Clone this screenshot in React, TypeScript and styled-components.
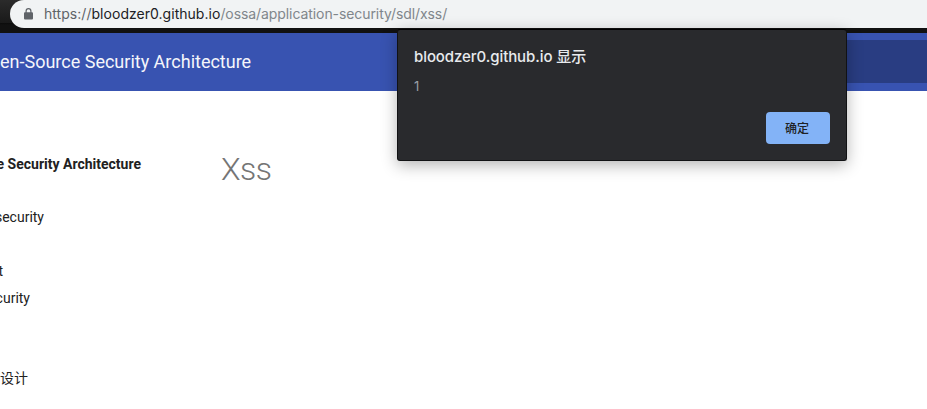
import React from "react";
import styled, { createGlobalStyle } from "styled-components";

const GlobalStyle = createGlobalStyle`
  * { box-sizing: border-box; }
  html, body { margin: 0; padding: 0; background: #fff; overflow: hidden; }
`;

const Page = styled.div`
  position: relative;
  width: 927px;
  height: 409px;
  overflow: hidden;
  background: #fff;
  font-family: Roboto, "Noto Sans CJK SC", sans-serif;
`;

const Toolbar = styled.div`
  height: 33px;
  padding-left: 10px;
  background: linear-gradient(#2b2b2b 0, #191919 23px, #0b0b0b 23px, #111 25px, #111 33px);
`;

const AddressBar = styled.div`
  display: flex;
  align-items: center;
  height: 28px;
  padding-left: 14px;
  background: #f1f3f4;
  border-radius: 14px 0 0 14px;
`;

const Lock = styled.svg`
  width: 9px;
  height: 12px;
  margin-right: 11px;
`;

const Url = styled.div`
  font: 400 14px/20px Inter, sans-serif;
  letter-spacing: -0.08px;
  color: #80868b;
  white-space: nowrap;
`;

const Scheme = styled.span`
  letter-spacing: 0.04px;
  color: #5f6368;
`;

const Host = styled.span`
  letter-spacing: 0.03px;
  color: #202124;
`;

const Header = styled.header`
  display: flex;
  align-items: center;
  justify-content: space-between;
  height: 58px;
  background: #3853b1;
`;

const SiteTitle = styled.div`
  font-size: 18px;
  line-height: 24px;
  color: #f5f6fb;
  white-space: nowrap;
`;

const SearchBox = styled.div`
  width: 127px;
  height: 43px;
  margin-bottom: 1px;
  background: #293d82;
`;

const Main = styled.main`
  display: flex;
`;

const Sidebar = styled.nav`
  width: 221px;
  padding-top: 63px;
`;

const NavItem = styled.div<{ $end: number; $gap?: number; $bold?: boolean }>`
  display: flex;
  justify-content: flex-end;
  width: ${(p) => p.$end}px;
  height: 20px;
  margin-bottom: ${(p) => p.$gap ?? 0}px;
  font-size: 14px;
  line-height: 20px;
  font-weight: ${(p) => (p.$bold ? 700 : 400)};
  color: #212121;
  white-space: nowrap;
`;

const Title = styled.h1`
  margin: 57px 0 0;
  font-size: 32px;
  line-height: 42px;
  font-weight: 300;
  letter-spacing: -0.5px;
  color: #757575;
`;

const Dialog = styled.section`
  position: absolute;
  left: 397px;
  top: 29px;
  display: flex;
  flex-direction: column;
  width: 450px;
  height: 132px;
  padding: 16px;
  border: 1px solid #111214;
  border-top-color: #000;
  border-radius: 3px;
  background: #292a2d;
  box-shadow: 0 4px 16px rgba(0, 0, 0, 0.3);
`;

const Origin = styled.div`
  font: 500 15px/22px Inter, "Noto Sans CJK SC", sans-serif;
  letter-spacing: -0.08px;
  color: #e8eaed;
  white-space: nowrap;
`;

const Message = styled.div`
  margin-top: 9px;
  font: 400 13px/18px Inter, sans-serif;
  color: #9aa0a6;
`;

const Confirm = styled.button`
  align-self: flex-end;
  width: 64px;
  height: 32px;
  margin-top: auto;
  padding: 0 2px 0 0;
  border: 0;
  border-radius: 4px;
  background: #83b3f7;
  color: #202124;
  font: 500 12px/32px "Noto Sans CJK SC", sans-serif;
`;

export default function App() {
  return (
    <Page>
      <GlobalStyle />
      <Toolbar>
        <AddressBar>
          <Lock viewBox="0 0 9 12">
            <path d="M2.1 5V3.1a2.4 2.4 0 0 1 4.8 0V5" fill="none" stroke="#5f6368" strokeWidth="1.2" />
            <rect x="0" y="4.3" width="9" height="7.2" rx="1" fill="#5f6368" />
          </Lock>
          <Url>
            <Scheme>https://</Scheme>
            <Host>bloodzer0.github.io</Host>
            /ossa/application-security/sdl/xss/
          </Url>
        </AddressBar>
      </Toolbar>
      <Header>
        <SiteTitle>en-Source Security Architecture</SiteTitle>
        <SearchBox />
      </Header>
      <Main>
        <Sidebar>
          <NavItem $end={141} $gap={33} $bold>e Security Architecture</NavItem>
          <NavItem $end={44} $gap={34}>security</NavItem>
          <NavItem $end={3} $gap={7}>t</NavItem>
          <NavItem $end={30} $gap={60}>curity</NavItem>
          <NavItem $end={28}>设计</NavItem>
        </Sidebar>
        <Title>Xss</Title>
      </Main>
      <Dialog role="dialog">
        <Origin>bloodzer0.github.io 显示</Origin>
        <Message>1</Message>
        <Confirm>确定</Confirm>
      </Dialog>
    </Page>
  );
}
